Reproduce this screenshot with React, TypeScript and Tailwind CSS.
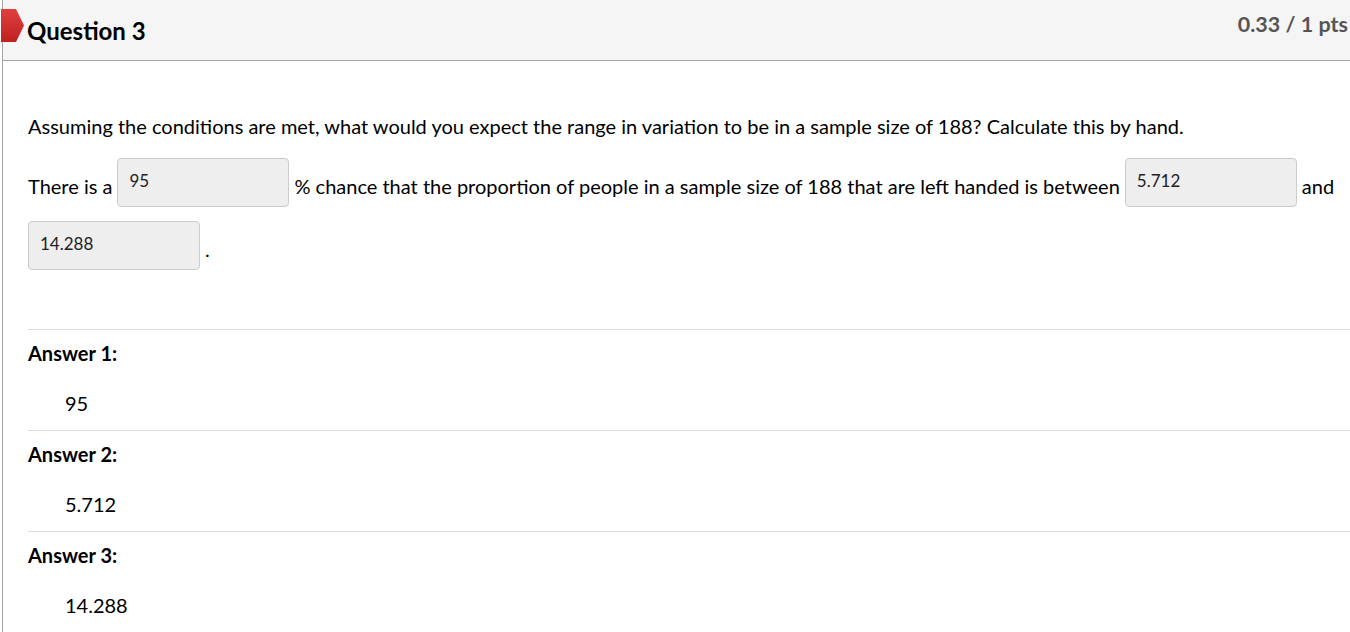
import React from 'react';

const answers = [
  { label: 'Answer 1:', value: '95' },
  { label: 'Answer 2:', value: '5.712' },
  { label: 'Answer 3:', value: '14.288' },
];

function Blank({ value, first = false }: { value: string; first?: boolean }) {
  return (
    <span
      className={`inline-block align-[7px] w-[172px] h-[49px] ${first ? 'ml-0' : 'ml-[5px]'} mr-[5px] px-[11px] pt-[12px] bg-[#eeeeee] border border-[#cccccc] rounded-[4px] text-[17px] leading-[20px] text-[#222]`}
    >
      {value}
    </span>
  );
}

export default function App() {
  return (
    <div
      className="min-h-screen bg-white"
      style={{ fontFamily: 'Lato, "Noto Sans", sans-serif' }}
    >
      <div className="relative ml-[2px] border-l border-[#a5a5a5] min-h-[632px]">
        {/* Header */}
        <div className="h-[61px] bg-[#f5f5f5] border-b border-[#a5a5a5] flex items-start justify-between pl-[24px] pr-[2px]">
          <h2 className="mt-[16px] text-[24px] leading-[30px] font-bold text-black">Question 3</h2>
          <div className="mt-[10px] text-[21.5px] leading-[28px] font-bold text-[#555]">0.33 / 1 pts</div>
        </div>
        <svg className="absolute left-[-2px] top-[9px]" width="24" height="34" viewBox="0 0 24 34">
          <defs>
            <linearGradient id="flag" x1="0" y1="0" x2="0" y2="1">
              <stop offset="0" stopColor="#e04040" />
              <stop offset="1" stopColor="#c02020" />
            </linearGradient>
          </defs>
          <polygon points="0,0 15,0 23,16.5 15,33 0,33" fill="url(#flag)" />
        </svg>

        {/* Body */}
        <div className="pl-[25px] text-[20px] text-black">
          <p className="mt-[52px] leading-[26px]">
            Assuming the conditions are met, what would you expect the range in variation to be in a sample size of 188? Calculate this by hand.
          </p>
          <div className="mt-[16px] leading-[63px]">
            There is a<Blank value="95" />% chance that the proportion of people in a sample size of 188 that are left handed is between
            <Blank value="5.712" />and <Blank value="14.288" first />.
          </div>

          <div className="mt-[48px]">
            {answers.map((a) => (
              <div key={a.label} className="border-t border-[#dddddd] h-[101px]">
                <div className="pt-[10px] font-bold leading-[26px]">{a.label}</div>
                <div className="pt-[24px] pl-[37px] leading-[26px]">{a.value}</div>
              </div>
            ))}
          </div>
        </div>
      </div>
    </div>
  );
}
